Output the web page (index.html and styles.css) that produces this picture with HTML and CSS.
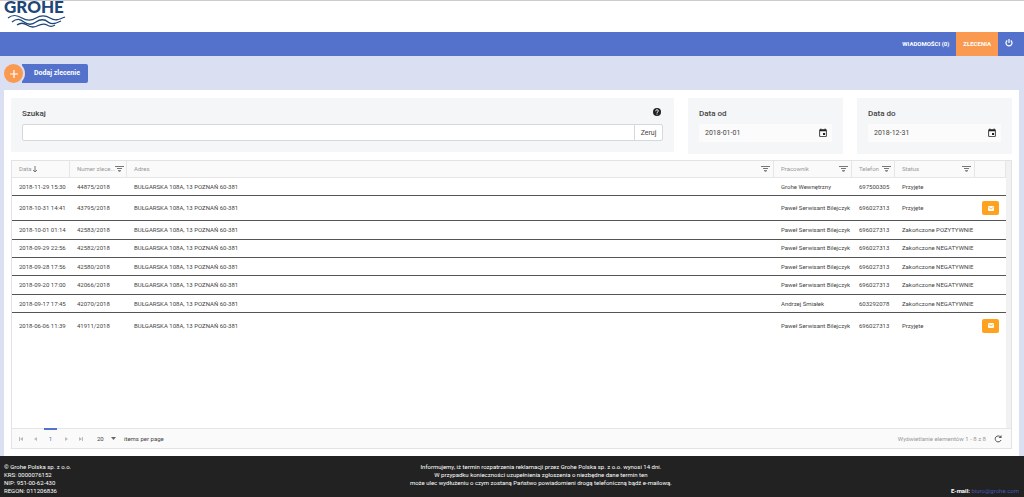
FILE: index.html
```html
<!DOCTYPE html>
<html lang="pl">
<head>
<meta charset="utf-8">
<title>Grohe – Zlecenia</title>
<link rel="stylesheet" href="styles.css">
</head>
<body>
<svg class="defs" width="0" height="0" aria-hidden="true">
  <symbol id="filter" viewBox="0 0 9 8"><path d="M0 1.500h9M2 3.500h5" stroke="#777" fill="none"/><path d="M3 5h3v1l-1.500 1L3 6z" fill="#888"/></symbol>
  <symbol id="calendar" viewBox="0 0 24 24"><path d="M19 3h-1V1h-2v2H8V1H6v2H5a2 2 0 0 0-2 2v14a2 2 0 0 0 2 2h14a2 2 0 0 0 2-2V5a2 2 0 0 0-2-2zm0 16H5V8h14zM12 12h5v5h-5z" fill="#222" fill-rule="evenodd"/></symbol>
  <symbol id="mail" viewBox="0 0 12 10"><rect width="12" height="10" rx="2" fill="#fff"/><path d="M1 2.500l5 3.500 5-3.500" stroke="#ffa726" stroke-width="1.500" fill="none"/></symbol>
</svg>
<header class="top">
  <svg class="logo" viewBox="0 0 64 28" width="64" height="28" role="img" aria-label="Grohe">
    <text class="logo-text" x="0" y="12">GROHE</text>
    <g fill="none" stroke="#1d4679" stroke-width="1.300">
      <path d="M4 17c5-4 9-3 14 0s9 3 14 0 9-3 14 0 8 2 15-1"/>
      <path d="M8 21c5-4 8-3 12 0s8 3 12 0 9-3 12 0 7 2 13-1"/>
      <path d="M13 24c4-3 7-2 10 0s6 3 10 1 7-3 10-1 5 2 8 0"/>
    </g>
  </svg>
</header>
<nav class="nav">
  <a class="nav-link" href="#">WIADOMOŚCI (0)</a>
  <a class="nav-link active" href="#">ZLECENIA</a>
  <a class="nav-link power" href="#" aria-label="Wyloguj"><svg width="8" height="8" viewBox="0 0 8 8" fill="none" stroke="#fff" stroke-width="1.200"><path d="M2.300 1.500a3 3 0 1 0 3.400 0M4 0v4"/></svg></a>
</nav>
<main class="main">
  <button class="add" type="button"><span class="add-icon"><svg width="10" height="10" viewBox="0 0 10 10" stroke="#fff" stroke-width="1.200"><path d="M5 1v8M1 5h8"/></svg></span><span class="add-label">Dodaj zlecenie</span></button>
  <section class="panel">
    <form class="filters">
      <div class="card search">
        <div class="card-head"><label for="q">Szukaj</label>
          <svg width="8" height="8" viewBox="0 0 8 8"><circle cx="4" cy="4" r="4" fill="#222"/><path d="M2.700 3.200c0-2 2.700-1.800 2.700-.2 0 .9-1.400.8-1.400 1.900M4 5.600v1" stroke="#fff" fill="none"/></svg></div>
        <div class="search-row"><input id="q" type="text"><button type="button">Zeruj</button></div>
      </div>
      <div class="card date"><label for="from">Data od</label>
        <div class="date-box"><input id="from" type="text" value="2018-01-01"><svg width="10" height="10"><use href="#calendar"/></svg></div></div>
      <div class="card date"><label for="to">Data do</label>
        <div class="date-box"><input id="to" type="text" value="2018-12-31"><svg width="10" height="10"><use href="#calendar"/></svg></div></div>
    </form>
    <div class="grid">
      <div class="grid-body">
        <table>
          <colgroup><col class="c-date"><col class="c-num"><col><col class="c-worker"><col class="c-phone"><col class="c-status"><col class="c-action"></colgroup>
          <thead><tr>
            <th><div class="th"><span>Data <svg width="4" height="7" viewBox="0 0 4 7" fill="none" stroke="#777"><path d="M2 0v6M0 4l2 2 2-2"/></svg></span></div></th>
            <th><div class="th"><span>Numer zlece...</span><svg width="9" height="8"><use href="#filter"/></svg></div></th>
            <th><div class="th"><span>Adres</span><svg width="9" height="8"><use href="#filter"/></svg></div></th>
            <th><div class="th"><span>Pracownik</span><svg width="9" height="8"><use href="#filter"/></svg></div></th>
            <th><div class="th"><span>Telefon</span><svg width="9" height="8"><use href="#filter"/></svg></div></th>
            <th><div class="th"><span>Status</span><svg width="9" height="8"><use href="#filter"/></svg></div></th>
            <th></th>
          </tr></thead>
          <tbody>
            <tr><td>2018-11-29 15:30</td><td>44875/2018</td><td>BUŁGARSKA 108A, 13 POZNAŃ 60-381</td><td>Grohe Wewnętrzny</td><td>697500305</td><td>Przyjęte</td><td></td></tr>
            <tr class="tall"><td>2018-10-31 14:41</td><td>43795/2018</td><td>BUŁGARSKA 108A, 13 POZNAŃ 60-381</td><td>Paweł Serwisant Bilejczyk</td><td>696027313</td><td>Przyjęte</td><td><button class="mail" type="button" aria-label="Wiadomość"><svg width="6" height="5"><use href="#mail"/></svg></button></td></tr>
            <tr><td>2018-10-01 01:14</td><td>42583/2018</td><td>BUŁGARSKA 108A, 13 POZNAŃ 60-381</td><td>Paweł Serwisant Bilejczyk</td><td>696027313</td><td>Zakończone POZYTYWNIE</td><td></td></tr>
            <tr><td>2018-09-29 22:56</td><td>42582/2018</td><td>BUŁGARSKA 108A, 13 POZNAŃ 60-381</td><td>Paweł Serwisant Bilejczyk</td><td>696027313</td><td>Zakończone NEGATYWNIE</td><td></td></tr>
            <tr><td>2018-09-28 17:56</td><td>42580/2018</td><td>BUŁGARSKA 108A, 13 POZNAŃ 60-381</td><td>Paweł Serwisant Bilejczyk</td><td>696027313</td><td>Zakończone NEGATYWNIE</td><td></td></tr>
            <tr><td>2018-09-20 17:00</td><td>42066/2018</td><td>BUŁGARSKA 108A, 13 POZNAŃ 60-381</td><td>Paweł Serwisant Bilejczyk</td><td>696027313</td><td>Zakończone NEGATYWNIE</td><td></td></tr>
            <tr><td>2018-09-17 17:45</td><td>42070/2018</td><td>BUŁGARSKA 108A, 13 POZNAŃ 60-381</td><td>Andrzej Śmiałek</td><td>603292078</td><td>Zakończone NEGATYWNIE</td><td></td></tr>
            <tr class="tall"><td>2018-06-06 11:39</td><td>41911/2018</td><td>BUŁGARSKA 108A, 13 POZNAŃ 60-381</td><td>Paweł Serwisant Bilejczyk</td><td>696027313</td><td>Przyjęte</td><td><button class="mail" type="button" aria-label="Wiadomość"><svg width="6" height="5"><use href="#mail"/></svg></button></td></tr>
          </tbody>
        </table>
        <div class="track"></div>
      </div>
      <div class="pager">
        <button type="button" aria-label="Pierwsza"><svg width="4" height="4" viewBox="0 0 4 4" fill="#bbb"><path d="M0 0h1v4H0zM4 0v4L1 2z"/></svg></button>
        <button type="button" aria-label="Poprzednia"><svg width="4" height="4" viewBox="0 0 4 4" fill="#bbb"><path d="M3 0v4L0 2z"/></svg></button>
        <button type="button" class="current">1</button>
        <button type="button" aria-label="Następna"><svg width="4" height="4" viewBox="0 0 4 4" fill="#bbb"><path d="M1 0v4l3-2z"/></svg></button>
        <button type="button" aria-label="Ostatnia"><svg width="4" height="4" viewBox="0 0 4 4" fill="#bbb"><path d="M3 0h1v4H3zM0 0v4l3-2z"/></svg></button>
        <div class="size"><select id="size"><option>20</option></select><svg width="5" height="3" viewBox="0 0 5 3"><path d="M0 0h5L2.500 3z" fill="#666"/></svg></div>
        <label for="size">items per page</label>
        <span class="info">Wyświetlanie elementów 1 - 8 z 8</span>
        <button type="button" class="refresh" aria-label="Odśwież"><svg width="8" height="8" viewBox="0 0 8 8" fill="none" stroke="#555"><path d="M6.500 2A3 3 0 1 0 7 5"/><path d="M7.500 0v3h-3z" fill="#555" stroke="none"/></svg></button>
      </div>
    </div>
  </section>
</main>
<footer class="footer">
  <div>© Grohe Polska sp. z o.o.<br>KRS: 0000076152<br>NIP: 951-00-62-430<br>REGON: 011206836</div>
  <div class="notice">Informujemy, iż termin rozpatrzenia reklamacji przez Grohe Polska sp. z o.o. wynosi 14 dni.<br>W przypadku konieczności uzupełnienia zgłoszenia o niezbędne dane termin ten<br>może ulec wydłużeniu o czym zostaną Państwo powiadomieni drogą telefoniczną bądź e-mailową.</div>
  <div class="contact"><b>E-mail:</b> <a href="mailto:biuro@grohe.com">biuro@grohe.com</a></div>
</footer>
</body>
</html>
```

FILE: styles.css
```css
* { box-sizing: border-box; }
body { margin: 0; min-height: 100vh; display: flex; flex-direction: column; background: #dadff1; font: 6px/8px Roboto, sans-serif; color: #444; }
button, input, select { font: inherit; color: inherit; border: 0; padding: 0; margin: 0; background: none; outline: 0; }
svg { flex: none; display: block; }
.defs { position: absolute; }
.top { height: 32px; padding-left: 4px; background: #fff; border-top: 1px solid #ccc; }
.logo { overflow: visible; }
.logo-text { font: 900 17px Lato, sans-serif; fill: #1d4679; }
.nav { height: 24px; display: flex; justify-content: flex-end; background: #5472cb; }
.nav-link { display: flex; align-items: center; padding: 0 7px; color: #fff; font-size: 6px; font-weight: 700; text-decoration: none; }
.nav-link.active { background: #fa9a50; }
.nav-link.power { padding-right: 11px; padding-bottom: 2px; }
.main { flex: 1; display: flex; flex-direction: column; align-items: flex-start; padding: 8px 5px 0 4px; }
.add { display: flex; align-items: center; height: 19px; margin-bottom: 7px; color: #fff; font-size: 7px; font-weight: 700; }
.add-icon { width: 23px; height: 23px; margin: -2px; display: grid; place-items: center; border: 2px solid #dadff1; border-radius: 50%; background: #fa9a50; z-index: 1; }
.add-label { height: 19px; margin-left: -1px; padding: 0 8px 0 12px; line-height: 19px; border-radius: 0 2px 2px 0; background: #5472cb; }
.panel { flex: 1; align-self: stretch; display: flex; flex-direction: column; padding: 8px 7px 7px; background: #fff; }
.filters { display: flex; align-items: flex-start; gap: 14px; margin-bottom: 6px; }
.card { padding: 12px 11px; background: #f5f6f8; font-size: 7px; }
.card label { font-size: 8px; font-weight: 500; }
.search { flex: 1; height: 54px; }
.card-head { display: flex; justify-content: space-between; padding-right: 2px; height: 8px; }
.card-head svg { margin-top: -2px; }
.search-row { display: flex; margin-top: 6px; height: 17px; border: 1px solid #d5d8dc; border-radius: 2px; background: #fff; }
.search-row input { flex: 1; min-width: 0; padding: 0 5px; }
.search-row button { width: 28px; border-left: 1px solid #d5d8dc; }
.date { width: 155px; height: 56px; }
.date-box { display: flex; align-items: center; height: 18px; margin-top: 6px; padding: 0 4px 0 6px; background: #fbfbfb; }
.date-box input { flex: 1; min-width: 0; }
.grid { flex: 1; display: flex; flex-direction: column; border: 1px solid #e3e3e3; }
.grid-body { flex: 1; display: flex; align-items: stretch; }
table { flex: 1; width: 100%; align-self: flex-start; height: 177px; table-layout: fixed; border-collapse: separate; border-spacing: 0; }
.c-date { width: 58px; } .c-num { width: 57px; } .c-worker { width: 78px; } .c-phone { width: 43px; } .c-status { width: 80px; } .c-action { width: 31px; }
th, td { padding: 0 0 0 7px; text-align: left; white-space: nowrap; }
th { height: 17px; background: #fafafa; color: #999; font-weight: 400; border-bottom: 1px solid #e6e6e6; border-right: 1px solid #e6e6e6; }
.th { display: flex; align-items: center; justify-content: space-between; padding-right: 3px; }
.th svg { display: inline-block; vertical-align: middle; }
td { height: 18px; border-bottom: 1px solid #555; }
.tall td { height: 24px; }
tr:last-child td { border-bottom: 0; }
.mail { display: grid; place-items: center; width: 17px; height: 14px; background: #ffa21f; border-radius: 2px; }
.track { width: 5px; flex: none; background: #f1f1f1; }
.pager { height: 20px; display: flex; align-items: center; padding: 0 9px 0 2px; background: #fafafa; border-top: 1px solid #e6e6e6; }
.pager button { width: 13px; height: 20px; display: grid; place-items: center; margin-right: 2px; }
.pager .current { border-top: 1px solid #5472cb; color: #5472cb; box-shadow: 0 -1px #5472cb; }
.size { display: flex; align-items: center; margin: 0 8px; }
.size select { width: 14px; appearance: none; }
.info { margin-left: auto; margin-right: 8px; color: #999; }
.pager .refresh { width: 8px; margin: 0; }
.footer { min-height: 41px; display: grid; grid-template-columns: 5fr 8fr 4fr; gap: 0 8px; padding: 7px 5px 2px 4px; background: #222; color: #fff; font-size: 6px; }
.notice { text-align: center; }
.contact { text-align: right; align-self: end; }
.contact a { color: #4457b0; text-decoration: none; }
```
